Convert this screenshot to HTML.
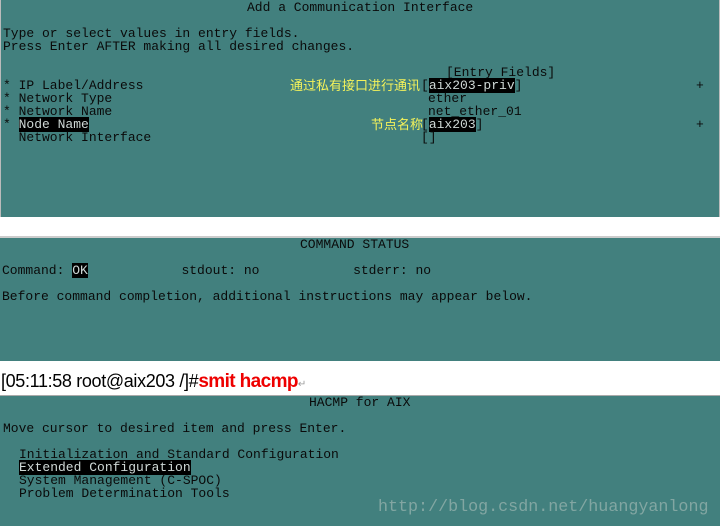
<!DOCTYPE html>
<html><head><meta charset="utf-8"><style>
html,body{margin:0;padding:0;width:720px;height:526px;overflow:hidden;background:#fff;position:relative}
.p{position:absolute;left:0;width:720px;background:#42807e}
.t{position:absolute;font-family:"Liberation Mono",monospace;font-size:13px;line-height:13px;color:#0a0a0a;white-space:pre}
.h{background:#000;color:#cfd8d6}
.cn{position:absolute;font-family:"Noto Sans CJK SC",sans-serif;font-size:13px;line-height:13px;color:#f4f25a;white-space:pre}
</style></head><body>
<div class="p" style="top:0;height:217px;border-left:1px solid #bbb;border-right:1px solid #bbb;box-sizing:border-box"></div>
<div class="p" style="top:236px;height:125px;border-top:2px solid #ccc;box-sizing:border-box"></div>
<div class="p" style="top:395px;height:131px;border-top:1px solid #aaa;box-sizing:border-box"></div>

<div class="t" style="top:1px;left:247px">Add a Communication Interface</div>
<div class="t" style="top:27px;left:3px">Type or select values in entry fields.</div>
<div class="t" style="top:40px;left:3px">Press Enter AFTER making all desired changes.</div>
<div class="t" style="top:66px;left:446px">[Entry Fields]</div>
<div class="t" style="top:79px;left:3px">* IP Label/Address</div>
<div class="t" style="top:92px;left:3px">* Network Type</div>
<div class="t" style="top:105px;left:3px">* Network Name</div>
<div class="t" style="top:118px;left:3px">* <span class="h">Node Name</span></div>
<div class="t" style="top:131px;left:3px">  Network Interface</div>
<div class="cn" style="top:78px;left:290px">通过私有接口进行通讯</div>
<div class="cn" style="top:117px;left:371px">节点名称</div>
<div class="t" style="top:79px;left:421px">[<span class="h">aix203-priv</span>]</div>
<div class="t" style="top:92px;left:428px">ether</div>
<div class="t" style="top:105px;left:428px">net_ether_01</div>
<div class="t" style="top:118px;left:421px">[<span class="h">aix203</span>]</div>
<div class="t" style="top:131px;left:421px">[]</div>
<div class="t" style="top:79px;left:696px">+</div>
<div class="t" style="top:118px;left:696px">+</div>

<div class="t" style="top:238px;left:300px">COMMAND STATUS</div>
<div class="t" style="top:264px;left:2px">Command: <span class="h">OK</span>            stdout: no            stderr: no</div>
<div class="t" style="top:290px;left:2px">Before command completion, additional instructions may appear below.</div>

<div style="position:absolute;top:370px;left:1px;font-family:'Liberation Sans',sans-serif;font-size:18px;line-height:22px;color:#000;white-space:pre;letter-spacing:-0.35px">[05:11:58 root@aix203 /]#<span style="color:#e00;font-weight:bold;font-size:19px;letter-spacing:-0.6px">smit hacmp</span><span style="color:#999;font-size:10px">↵</span></div>

<div class="t" style="top:396px;left:309px">HACMP for AIX</div>
<div class="t" style="top:422px;left:3px">Move cursor to desired item and press Enter.</div>
<div class="t" style="top:448px;left:19px">Initialization and Standard Configuration</div>
<div class="t" style="top:461px;left:19px"><span class="h">Extended Configuration</span></div>
<div class="t" style="top:474px;left:19px">System Management (C-SPOC)</div>
<div class="t" style="top:487px;left:19px">Problem Determination Tools</div>
<div style="position:absolute;top:498px;left:378px;font-family:'Liberation Mono',monospace;font-size:16.7px;line-height:20px;color:#82a6a2;white-space:pre">http://blog.csdn.net/huangyanlong</div>
</body></html>
